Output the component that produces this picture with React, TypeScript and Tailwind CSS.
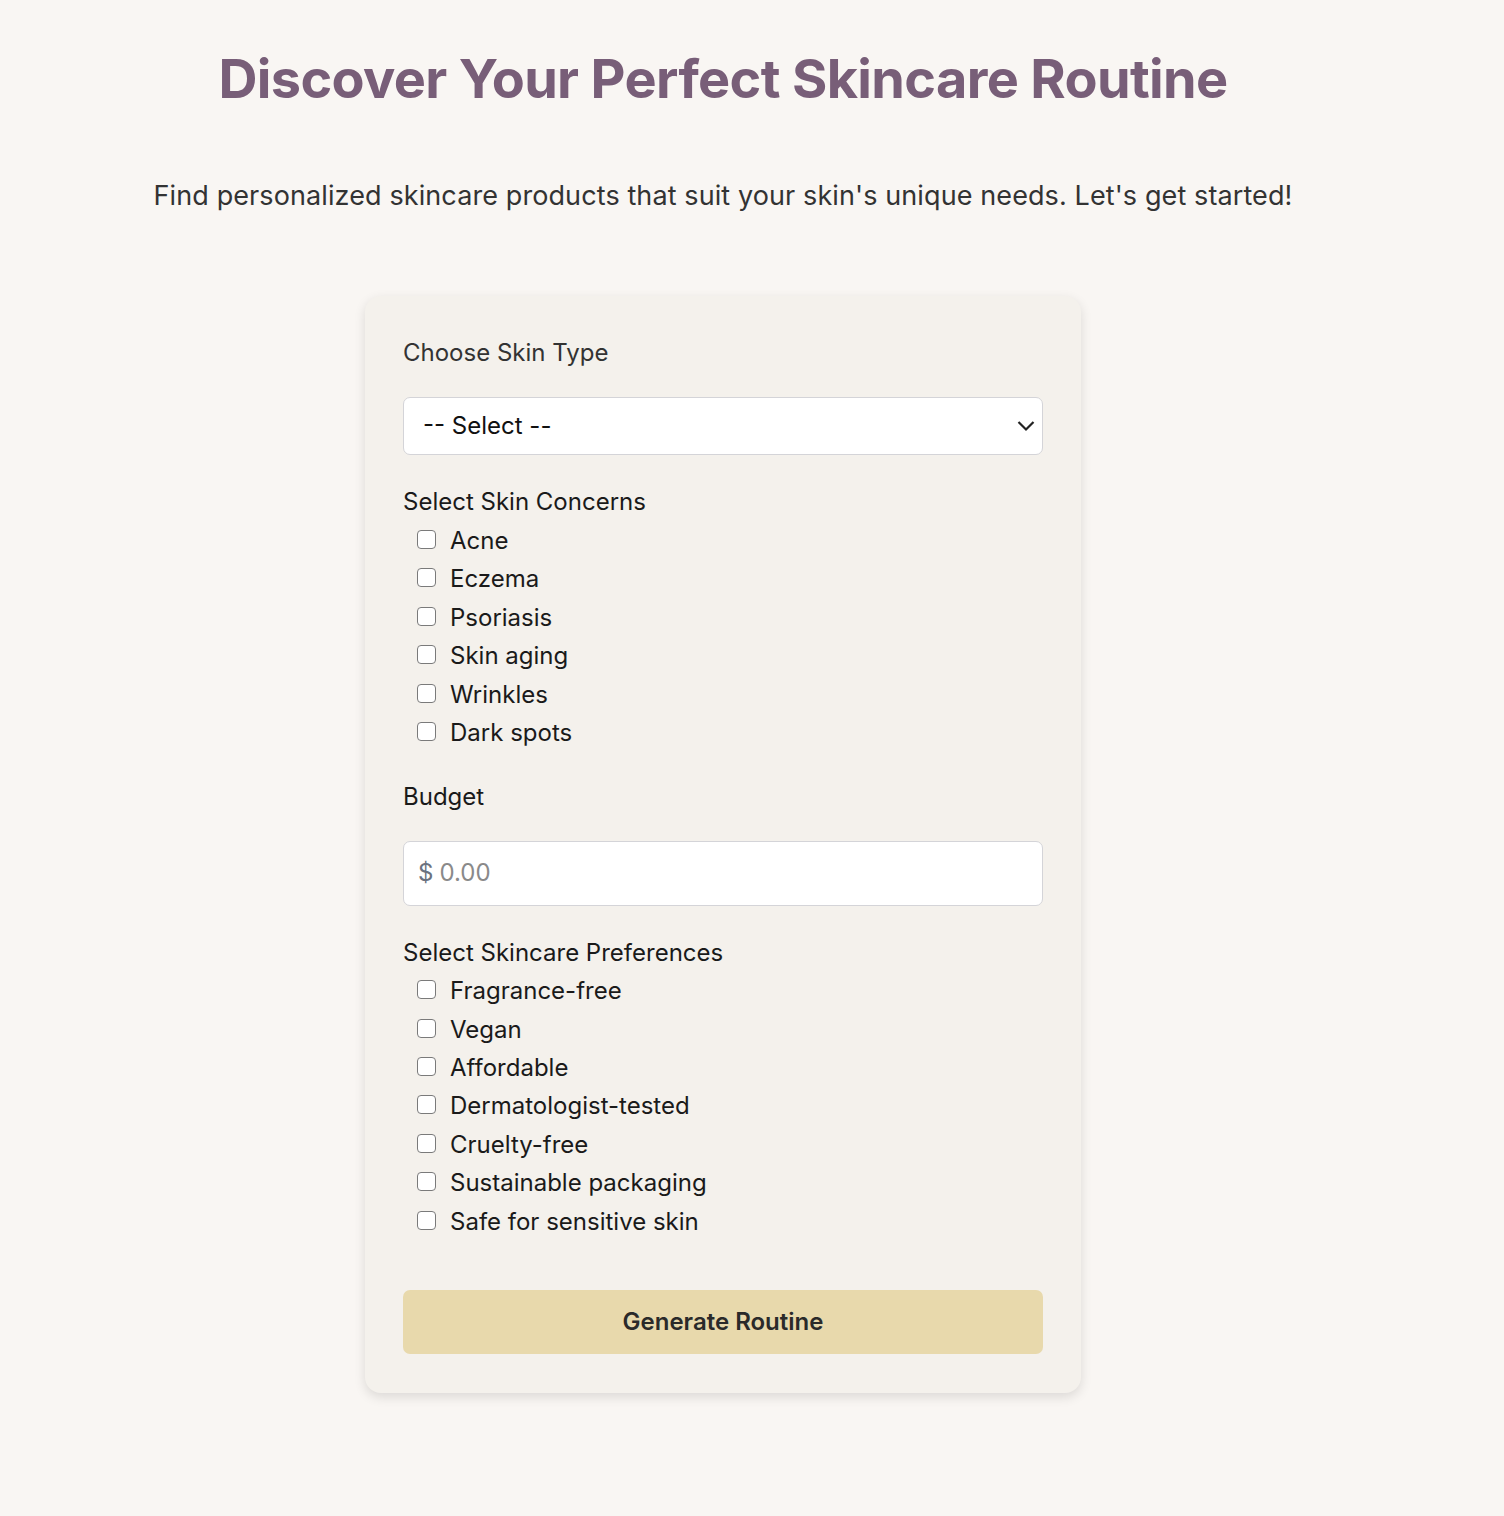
import React from "react";

const concerns = ["Acne", "Eczema", "Psoriasis", "Skin aging", "Wrinkles", "Dark spots"];
const prefs = [
  "Fragrance-free",
  "Vegan",
  "Affordable",
  "Dermatologist-tested",
  "Cruelty-free",
  "Sustainable packaging",
  "Safe for sensitive skin",
];

function Check({ label }: { label: string }) {
  return (
    <label className="flex items-center h-[38.4px] pl-[14px] text-[24px] text-[#1a1a1a]">
      <input
        type="checkbox"
        className="appearance-none w-[19px] h-[19px] border border-[#7a7a7a] rounded-[4px] bg-white mr-[14px] shrink-0 -mt-[3px]"
      />
      <span>{label}</span>
    </label>
  );
}

export default function App() {
  return (
    <div
      className="min-h-[1516px] bg-[#f9f6f3] w-full"
      style={{ fontFamily: "Inter, 'Noto Sans', sans-serif" }}
    >
      <div className="w-[1446px] flex flex-col items-center pt-[43px]">
        <h1 className="text-[54px] leading-[72px] font-bold text-[#785e78] tracking-[-0.65px]">
          Discover Your Perfect Skincare Routine
        </h1>
        <p className="mt-[62px] text-[27px] leading-[38px] text-[#333333] tracking-[0.1px]">
          Find personalized skincare products that suit your skin's unique needs. Let's get started!
        </p>
        <div className="mt-[81px] w-[716px] bg-[#f4f1ec] rounded-[16px] px-[38px] pt-[38px] pb-[39px] shadow-[0_4px_12px_rgba(0,0,0,0.12)]">
          <div className="text-[24px] leading-[38.4px] text-[#333333]">Choose Skin Type</div>
          <div className="mt-[25px] relative h-[58px] bg-white border border-[#d4d4d8] rounded-[7px] flex items-center pl-[19px]">
            <span className="text-[24px] text-[#111111]">-- Select --</span>
            <svg
              className="absolute right-[7px] top-1/2 -translate-y-1/2"
              width="18"
              height="11"
              viewBox="0 0 18 11"
              fill="none"
            >
              <path d="M1.5 1.5L9 9L16.5 1.5" stroke="#222" strokeWidth="2.2" />
            </svg>
          </div>

          <div className="mt-[28px] text-[24px] leading-[38.4px] text-[#1a1a1a]">Select Skin Concerns</div>
          <div className="flex flex-col">
            {concerns.map((c) => (
              <Check key={c} label={c} />
            ))}
          </div>

          <div className="mt-[26px] text-[24px] leading-[38.4px] text-[#1a1a1a]">Budget</div>
          <div className="mt-[24px] h-[65px] bg-white border border-[#d4d4d8] rounded-[7px] flex items-center pl-[14px] text-[24px]">
            <span className="text-[#6b7280] mr-[6px]">$</span>
            <input
              type="text"
              placeholder="0.00"
              className="flex-1 bg-transparent outline-none text-[24px] placeholder:text-[#8a8a8a]"
            />
          </div>

          <div className="mt-[28px] text-[24px] leading-[38.4px] text-[#1a1a1a]">
            Select Skincare Preferences
          </div>
          <div className="flex flex-col">
            {prefs.map((c) => (
              <Check key={c} label={c} />
            ))}
          </div>

          <button className="mt-[49px] w-full h-[64px] bg-[#e8d9ac] rounded-[7px] text-[24px] font-semibold text-[#2a2a2a]">
            Generate Routine
          </button>
        </div>
      </div>
    </div>
  );
}
